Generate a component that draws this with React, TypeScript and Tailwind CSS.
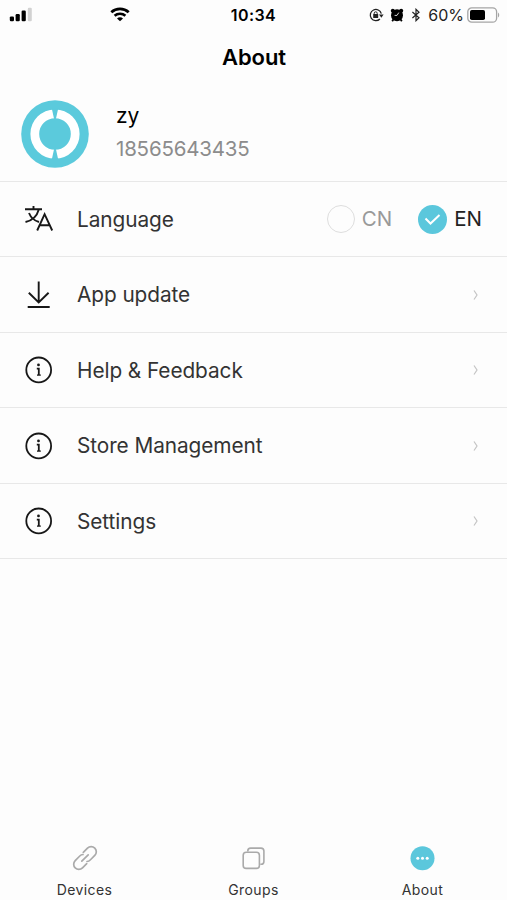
import type { ReactNode } from "react";

const SignalIcon = () => (
  <svg width="24" height="16" viewBox="0 0 24 16" fill="currentColor">
    <rect x="0.8" y="9.4" width="4.2" height="4.8" rx="1.2" />
    <rect x="6.6" y="7" width="4.2" height="7.2" rx="1.2" />
    <rect x="12.6" y="3.6" width="4.2" height="10.6" rx="1.2" />
    <rect x="18.8" y="0.8" width="4" height="13.4" rx="1.2" fill="#d2d2d2" />
  </svg>
);

const WifiIcon = () => (
  <svg width="20" height="15" viewBox="0 0 20 15" fill="none" stroke="currentColor">
    <path d="M1.3 5.2C6.2.8 13.8.8 18.7 5.2" strokeWidth="2.8" />
    <path d="M4.6 8.7c3-2.7 7.8-2.7 10.8 0" strokeWidth="2.6" />
    <path d="M7 11.4c1.7-1.5 4.3-1.5 6 0L10 14.3z" fill="currentColor" stroke="none" />
  </svg>
);

const RotationLockIcon = () => (
  <svg width="15" height="14" viewBox="0 0 15 14" fill="none" stroke="currentColor">
    <path d="M12.3 5.6A5.6 5.6 0 1 0 10.9 11" strokeWidth="1.3" />
    <path d="M10 6.5h4.6l-2.2 3.2z" fill="currentColor" stroke="none" />
    <rect x="4.2" y="6" width="5" height="3.9" rx=".5" fill="currentColor" stroke="none" />
    <path d="M5.2 6.5V5.3a1.5 1.5 0 0 1 3 0v1.2" strokeWidth="1" />
  </svg>
);

const AlarmIcon = () => (
  <svg width="14" height="14" viewBox="0 0 14 14" fill="currentColor">
    <circle cx="7" cy="7.2" r="6" />
    <circle cx="2.8" cy="2.7" r="2" />
    <circle cx="11.2" cy="2.7" r="2" />
    <path d="M2.2 13.2l2-3M11.8 13.2l-2-3" stroke="currentColor" strokeWidth="1.8" />
    <path d="M8.8 4.6L7 7.4H4.6" fill="none" stroke="#fff" strokeWidth=".8" />
  </svg>
);

const BluetoothIcon = () => (
  <svg width="10" height="14" viewBox="0 0 10 14" fill="none" stroke="currentColor" strokeWidth="1.2">
    <path d="M1.4 4l6.6 5.8L5 12.7V1.3L8 4.2 1.4 10" />
  </svg>
);

const BatteryIcon = () => (
  <svg width="33" height="16" viewBox="0 0 33 16">
    <rect x=".8" y=".8" width="28.8" height="14.4" rx="4" fill="none" stroke="#a5a5a5" strokeWidth="1.3" />
    <rect x="3" y="3" width="15" height="10" rx="1.8" fill="#000" />
    <path d="M31 5.5c1.6.8 1.6 4.2 0 5z" fill="#a5a5a5" />
  </svg>
);

const Avatar = () => (
  <svg width="68" height="68" viewBox="0 0 68 68">
    <circle cx="34" cy="34" r="33.8" fill="#5bcadc" />
    <circle cx="34" cy="34" r="20.2" fill="none" stroke="#fff" strokeWidth="8.8" />
    <path d="M30.8 8.5h6.4L34.9 19h-1.8zM30.8 59.5h6.4L34.9 49h-1.8z" fill="#5bcadc" />
  </svg>
);

const LanguageIcon = () => (
  <svg width="30" height="28" viewBox="0 0 30 28" fill="none" stroke="currentColor" strokeWidth="1.9">
    <path d="M1 4.3h17M9.5 1v3.3M14.8 4.5C13 11 8.5 15.5 1.5 17M5 8c1.8 4.6 5 7.6 10 9" />
    <path d="M13.2 25.5l7.4-16.3L28.2 25.5M16 20.3h9.8" />
  </svg>
);

const DownloadIcon = () => (
  <svg width="30" height="30" viewBox="0 0 30 30" fill="none" stroke="currentColor" strokeWidth="1.9">
    <path d="M14.7 1.5V22.5M4.8 12.7l9.9 9.8 9.9-9.8M3.7 27h22" />
  </svg>
);

const InfoIcon = () => (
  <svg width="30" height="30" viewBox="0 0 30 30" fill="none" stroke="currentColor" strokeWidth="1.8">
    <circle cx="14.7" cy="14.9" r="12.4" />
    <circle cx="14.5" cy="9.9" r="1.4" fill="currentColor" stroke="none" />
    <path d="M12.8 13.6h2v6.4" strokeWidth="1.8" />
    <path d="M13 20.1h3.8" strokeWidth="1.300" />
  </svg>
);

const ChevronIcon = () => (
  <svg width="6" height="12" viewBox="0 0 6 12" fill="none" stroke="#c4c4c4" strokeWidth="1.2">
    <path d="M1 1.5l3 4.5L1 10.5" />
  </svg>
);

const LinkIcon = () => (
  <svg width="28" height="28" viewBox="0 0 28 28" fill="none" stroke="#aaa" strokeWidth="1.7" strokeLinecap="round">
    <path d="M12.3 8.3l4.2-4.2a5.1 5.1 0 0 1 7.3 7.3l-4.6 4.6a5 5 0 0 1-3.2 1.5" />
    <path d="M15.7 19.7l-4.2 4.2a5.1 5.1 0 0 1-7.3-7.3L8.8 12a5 5 0 0 1 3.2-1.5" />
    <path d="M10.8 17.2l6.4-6.4" />
  </svg>
);

const GroupsIcon = () => (
  <svg width="28" height="28" viewBox="0 0 28 28" fill="none" stroke="#aaa" strokeWidth="1.6">
    <rect x="3.2" y="8.2" width="16.2" height="16.2" rx="3" />
    <path d="M7.8 7.6V6.9a2.8 2.8 0 0 1 2.8-2.8h10.3a3 3 0 0 1 3 3v10.3a2.8 2.8 0 0 1-2.8 2.8h-.8" />
  </svg>
);

const MoreIcon = () => (
  <svg width="28" height="28" viewBox="0 0 28 28">
    <circle cx="13.5" cy="14.3" r="12" fill="#5bc7dc" />
    <g fill="#fff">
      <circle cx="8.8" cy="14.3" r="1.5" />
      <circle cx="13.5" cy="14.3" r="1.5" />
      <circle cx="18.2" cy="14.3" r="1.5" />
    </g>
  </svg>
);

const Row = ({ icon, label, children }: { icon: ReactNode; label: string; children?: ReactNode }) => (
  <li className="flex h-[75.5px] items-center border-b border-[#e8e8e8] pt-px pl-6 text-[#171717]">
    <div className="grid w-[53px] place-items-start">{icon}</div>
    <span className="grow text-[20.8px] tracking-[-0.07px] text-[#333]">{label}</span>
    {children ?? (
      <div className="pr-7">
        <ChevronIcon />
      </div>
    )}
  </li>
);

const tabs = [
  { label: "Devices", icon: <LinkIcon /> },
  { label: "Groups", icon: <GroupsIcon /> },
  { label: "About", icon: <MoreIcon /> },
];

export default function App() {
  return (
    <div className="flex h-[900px] w-[507px] flex-col bg-[#fdfdfd] font-['Inter',sans-serif] text-black">
      {/* status bar */}
      <div className="grid h-[29px] grid-cols-3 items-center">
        <div className="flex items-center pl-[9px]">
          <SignalIcon />
          <div className="pl-[77px]">
            <WifiIcon />
          </div>
        </div>
        <span className="text-center text-[16px] font-semibold tracking-[0.4px]">10:34</span>
        <div className="flex items-center justify-end pr-[7px] text-[#222]">
          <RotationLockIcon />
          <div className="pl-1.5 text-black">
            <AlarmIcon />
          </div>
          <div className="pl-[7px]">
            <BluetoothIcon />
          </div>
          <span className="pr-[3px] pl-[7px] text-[16px]">60%</span>
          <BatteryIcon />
        </div>
      </div>

      <h1 className="flex h-14 items-center justify-center pl-px text-[22px] font-semibold tracking-[-0.1px]">
        About
      </h1>

      <div className="flex h-[96.5px] items-center border-b border-[#e8e8e8] pt-0.5 pl-[21px]">
        <Avatar />
        <div className="pb-1 pl-[27px]">
          <p className="text-[21px] leading-[33px]">zy</p>
          <p className="text-[20.5px] leading-[33px] tracking-[-0.2px] text-[#8c8c8c]">18565643435</p>
        </div>
      </div>

      <ul>
        <Row icon={<LanguageIcon />} label="Language">
          <div className="flex items-center pr-[25px] text-[20.5px]">
            <span className="size-[28px] rounded-full border-[1.5px] border-[#dedede]" />
            <span className="pl-[7px] text-[#999]">CN</span>
            <span className="ml-[26px] grid size-[29px] place-items-center rounded-full bg-[#5bc7dc]">
              <svg width="17" height="13" viewBox="0 0 17 13" fill="none" stroke="#fff" strokeWidth="2">
                <path d="M1.5 5.5l5 5L15.5 2" />
              </svg>
            </span>
            <span className="pl-[7px] text-[#222]">EN</span>
          </div>
        </Row>
        <Row icon={<DownloadIcon />} label="App update" />
        <Row icon={<InfoIcon />} label="Help & Feedback" />
        <Row icon={<InfoIcon />} label="Store Management" />
        <Row icon={<InfoIcon />} label="Settings" />
      </ul>

      {/* tab bar */}
      <nav className="mt-auto grid h-[56px] grid-cols-3">
        {tabs.map((tab) => (
          <div key={tab.label} className="flex flex-col items-center">
            {tab.icon}
            <span className="pt-[7px] text-[14px] leading-[21px] tracking-[0.4px] text-[#333]">{tab.label}</span>
          </div>
        ))}
      </nav>
    </div>
  );
}
